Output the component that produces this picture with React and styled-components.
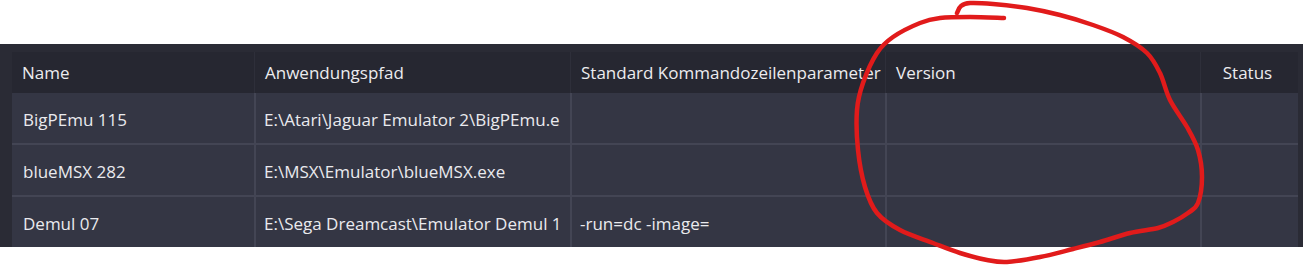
import styled, { createGlobalStyle } from "styled-components";

const GlobalStyle = createGlobalStyle`
  html, body {
    margin: 0;
    padding: 0;
    background: #ffffff;
    font-family: "Open Sans", "Noto Sans", sans-serif;
  }
`;

const Page = styled.div`
  position: relative;
  width: 1303px;
  height: 266px;
  overflow: hidden;
`;

const Panel = styled.div`
  margin-top: 44px;
  height: 203px;
  background: #2a2b35;
  padding: 8px 5px 0 12px;
  box-sizing: border-box;
  overflow: hidden;
`;

const Grid = styled.div`
  display: grid;
  grid-template-columns: 242px 316px 315px 315px 98px;
  grid-auto-rows: 52px;
  grid-template-rows: 41px;
`;

const HeadCell = styled.div`
  background: #262731;
  color: #ececef;
  font-size: 17px;
  display: flex;
  align-items: center;
  justify-content: ${(p) => (p.$center ? "center" : "flex-start")};
  padding: 0 14px 0 10px;
  border-left: ${(p) => (p.$first ? "none" : "1px solid #2e2f3a")};
  white-space: nowrap;
  overflow: hidden;
  box-sizing: border-box;
`;

const Cell = styled.div`
  background: #343644;
  color: #eaeaee;
  font-size: 17px;
  display: flex;
  align-items: center;
  padding: 2px 10px 0 ${(p) => (p.$first ? "11px" : "8px")};
  border-left: ${(p) => (p.$first ? "none" : "2px solid #434554")};
  border-bottom: 2px solid #434554;
  box-sizing: border-box;
  min-width: 0;
`;

const Clip = styled.span`
  display: block;
  overflow: hidden;
  white-space: nowrap;
`;

const Overlay = styled.svg`
  position: absolute;
  left: 0;
  top: 0;
  pointer-events: none;
`;

const columns = ["Name", "Anwendungspfad", "Standard Kommandozeilenparameter", "Version", "Status"];

const rows = [
  ["BigPEmu 115", "E:\\Atari\\Jaguar Emulator 2\\BigPEmu.exe", "", "", ""],
  ["blueMSX 282", "E:\\MSX\\Emulator\\blueMSX.exe", "", "", ""],
  ["Demul 07", "E:\\Sega Dreamcast\\Emulator Demul 1\\demul.exe", "-run=dc -image=", "", ""],
];

const circle = [
  [957, 13], [961, 6], [970, 3], [993, 4], [1027, 8], [1060, 15], [1093, 25], [1123, 37],
  [1147, 53], [1160, 73], [1170, 100], [1187, 127], [1198, 150], [1202, 177], [1198, 203],
  [1188, 213], [1173, 222], [1158, 228], [1130, 233], [1100, 242], [1073, 249], [1040, 257],
  [1007, 262], [987, 260], [960, 253], [933, 243], [900, 230], [877, 213], [865, 187],
  [858, 150], [857, 110], [863, 83], [877, 53], [893, 37], [920, 23], [940, 18], [970, 17],
  [1004, 18],
];

// catmull-rom through the points
const smooth = (pts) => {
  let d = `M${pts[0][0]},${pts[0][1]}`;
  for (let i = 0; i < pts.length - 1; i++) {
    const p0 = pts[i - 1] || pts[i];
    const p1 = pts[i];
    const p2 = pts[i + 1];
    const p3 = pts[i + 2] || p2;
    const c1 = [p1[0] + (p2[0] - p0[0]) / 6, p1[1] + (p2[1] - p0[1]) / 6];
    const c2 = [p2[0] - (p3[0] - p1[0]) / 6, p2[1] - (p3[1] - p1[1]) / 6];
    d += ` C${c1[0]},${c1[1]} ${c2[0]},${c2[1]} ${p2[0]},${p2[1]}`;
  }
  return d;
};

const App = () => {
  return (
    <Page>
      <GlobalStyle />
      <Panel>
        <Grid>
          {columns.map((c, i) => (
            <HeadCell key={c} $first={i === 0} $center={i === 4}>
              {c}
            </HeadCell>
          ))}
          {rows.map((r, ri) =>
            r.map((v, ci) => (
              <Cell key={`${ri}-${ci}`} $first={ci === 0}>
                <Clip>{v}</Clip>
              </Cell>
            ))
          )}
        </Grid>
      </Panel>
      <Overlay width="1303" height="266" viewBox="0 0 1303 266">
        <path
          d={smooth(circle)}
          fill="none"
          stroke="#e11b1b"
          strokeWidth="4.5"
          strokeLinecap="round"
          strokeLinejoin="round"
        />
      </Overlay>
    </Page>
  );
};

export default App;
